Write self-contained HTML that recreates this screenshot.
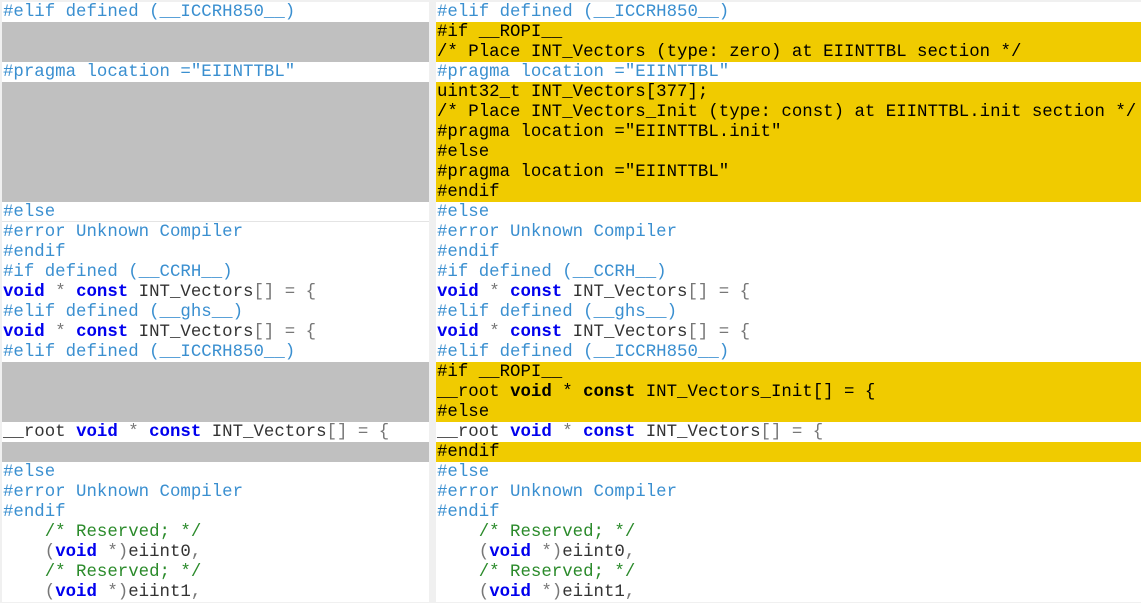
<!DOCTYPE html>
<html><head><meta charset="utf-8"><style>
body{margin:0;width:1141px;height:603px;overflow:hidden;background:#f0f0f0;font-family:"Liberation Mono",monospace;font-size:17.4px;}
.p{position:absolute;top:2px;background:#fff;}
#l{left:2px;width:427px}
#r{left:436px;width:705px}
.ln{height:20px;line-height:21px;white-space:pre;color:#333;overflow:hidden;padding-left:1px}
.g{background:#c0c0c0}
.y{background:#f0cb00;color:#000}
.pp{color:#3a8fd0}
.k{color:#0000ee;font-weight:bold}
.y .k{color:#000}
.c{color:#2a8a2a}
.o{color:#777}
</style></head><body>
<div class="p" id="l">
<div class="ln pp">#elif defined (__ICCRH850__)</div>
<div class="ln g"></div><div class="ln g"></div>
<div class="ln pp">#pragma location ="EIINTTBL"</div>
<div class="ln g"></div><div class="ln g"></div><div class="ln g"></div><div class="ln g"></div><div class="ln g"></div><div class="ln g"></div>
<div class="ln pp" style="border-bottom:1px solid #e4e4e4;height:19px">#else</div>
<div class="ln pp">#error Unknown Compiler</div>
<div class="ln pp">#endif</div>
<div class="ln pp">#if defined (__CCRH__)</div>
<div class="ln"><span class="k">void</span> <span class="o">*</span> <span class="k">const</span> INT_Vectors<span class="o">[] = {</span></div>
<div class="ln pp">#elif defined (__ghs__)</div>
<div class="ln"><span class="k">void</span> <span class="o">*</span> <span class="k">const</span> INT_Vectors<span class="o">[] = {</span></div>
<div class="ln pp">#elif defined (__ICCRH850__)</div>
<div class="ln g"></div><div class="ln g"></div><div class="ln g"></div>
<div class="ln">__root <span class="k">void</span> <span class="o">*</span> <span class="k">const</span> INT_Vectors<span class="o">[] = {</span></div>
<div class="ln g"></div>
<div class="ln pp">#else</div>
<div class="ln pp">#error Unknown Compiler</div>
<div class="ln pp">#endif</div>
<div class="ln c">    /* Reserved; */</div>
<div class="ln">    <span class="o">(</span><span class="k">void</span> <span class="o">*)</span>eiint0<span class="o">,</span></div>
<div class="ln c">    /* Reserved; */</div>
<div class="ln">    <span class="o">(</span><span class="k">void</span> <span class="o">*)</span>eiint1<span class="o">,</span></div>
</div>
<div class="p" id="r">
<div class="ln pp">#elif defined (__ICCRH850__)</div>
<div class="ln y">#if __ROPI__</div>
<div class="ln y">/* Place INT_Vectors (type: zero) at EIINTTBL section */</div>
<div class="ln pp">#pragma location ="EIINTTBL"</div>
<div class="ln y">uint32_t INT_Vectors[377];</div>
<div class="ln y">/* Place INT_Vectors_Init (type: const) at EIINTTBL.init section */</div>
<div class="ln y">#pragma location ="EIINTTBL.init"</div>
<div class="ln y">#else</div>
<div class="ln y">#pragma location ="EIINTTBL"</div>
<div class="ln y">#endif</div>
<div class="ln pp">#else</div>
<div class="ln pp">#error Unknown Compiler</div>
<div class="ln pp">#endif</div>
<div class="ln pp">#if defined (__CCRH__)</div>
<div class="ln"><span class="k">void</span> <span class="o">*</span> <span class="k">const</span> INT_Vectors<span class="o">[] = {</span></div>
<div class="ln pp">#elif defined (__ghs__)</div>
<div class="ln"><span class="k">void</span> <span class="o">*</span> <span class="k">const</span> INT_Vectors<span class="o">[] = {</span></div>
<div class="ln pp">#elif defined (__ICCRH850__)</div>
<div class="ln y">#if __ROPI__</div>
<div class="ln y">__root <span class="k">void</span> * <span class="k">const</span> INT_Vectors_Init[] = {</div>
<div class="ln y">#else</div>
<div class="ln">__root <span class="k">void</span> <span class="o">*</span> <span class="k">const</span> INT_Vectors<span class="o">[] = {</span></div>
<div class="ln y">#endif</div>
<div class="ln pp">#else</div>
<div class="ln pp">#error Unknown Compiler</div>
<div class="ln pp">#endif</div>
<div class="ln c">    /* Reserved; */</div>
<div class="ln">    <span class="o">(</span><span class="k">void</span> <span class="o">*)</span>eiint0<span class="o">,</span></div>
<div class="ln c">    /* Reserved; */</div>
<div class="ln">    <span class="o">(</span><span class="k">void</span> <span class="o">*)</span>eiint1<span class="o">,</span></div>
</div>
</body></html>
